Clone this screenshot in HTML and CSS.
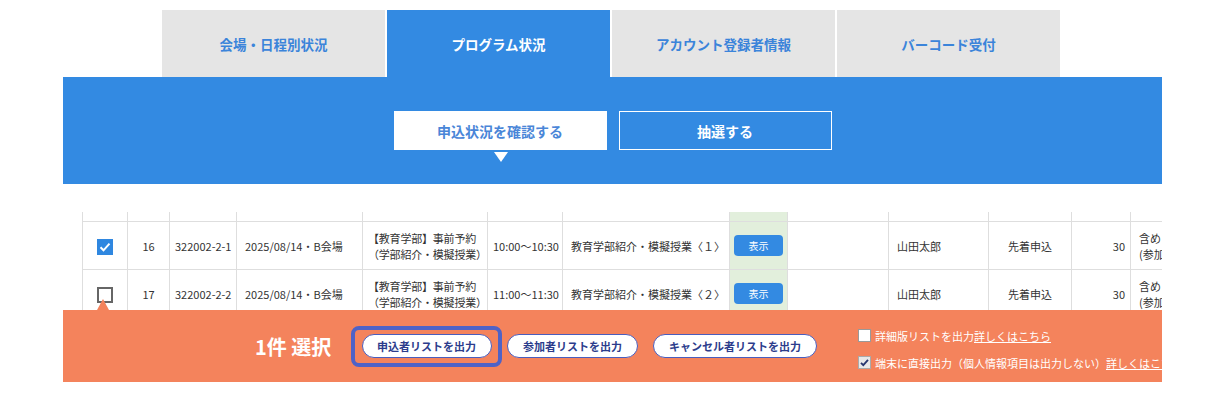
FILE: index.html
```html
<!DOCTYPE html>
<html>
  <head>
    <title>プログラム状況</title>
    <link rel="stylesheet" href="styles.css">
  </head>
  <body>
    <div class="page">
      <div class="tabs">
        <a class="tab">会場・日程別状況</a>
        <a class="tab tab-active">プログラム状況</a>
        <a class="tab">アカウント登録者情報</a>
        <a class="tab">バーコード受付</a>
      </div>
      <div class="band">
        <button class="sub-btn sub-btn-active">申込状況を確認する</button>
        <button class="sub-btn">抽選する</button>
      </div>

      <div class="table-area">
        <table class="list">
          <colgroup>
            <col style="width:45px"><col style="width:42px"><col style="width:67px"><col style="width:126px">
            <col style="width:125px"><col style="width:75px"><col style="width:167px"><col style="width:58px">
            <col style="width:101px"><col style="width:100px"><col style="width:83px"><col style="width:59px">
            <col style="width:100px">
          </colgroup>
          <tr class="head">
            <td></td><td></td><td></td><td></td><td></td><td></td><td></td>
            <td class="col-green"></td><td></td><td></td><td></td><td></td><td></td>
          </tr>
          <tr>
            <td class="c"><span class="check check-on"><svg viewBox="0 0 16 16" width="16" height="16"><path d="M3.5 8.3l3 3 6-6.6" fill="none" stroke="#fff" stroke-width="2"/></svg></span></td>
            <td class="c">16</td>
            <td>322002-2-1</td>
            <td class="pl">2025/08/14・B会場</td>
            <td class="pl tight">【教育学部】事前予約<br>（学部紹介・模擬授業）</td>
            <td>10:00〜10:30</td>
            <td class="pl">教育学部紹介・模擬授業〈１〉</td>
            <td class="col-green"><button class="show-btn">表示</button></td>
            <td></td>
            <td class="pl">山田太郎</td>
            <td class="c">先着申込</td>
            <td class="r">30</td>
            <td class="pl">含め<br>(参加</td>
          </tr>
          <tr>
            <td class="c"><span class="check"></span></td>
            <td class="c">17</td>
            <td>322002-2-2</td>
            <td class="pl">2025/08/14・B会場</td>
            <td class="pl tight">【教育学部】事前予約<br>（学部紹介・模擬授業）</td>
            <td>11:00〜11:30</td>
            <td class="pl">教育学部紹介・模擬授業〈２〉</td>
            <td class="col-green"><button class="show-btn">表示</button></td>
            <td></td>
            <td class="pl">山田太郎</td>
            <td class="c">先着申込</td>
            <td class="r">30</td>
            <td class="pl">含め<br>(参加</td>
          </tr>
        </table>
      </div>

      <div class="action-bar">
        <span class="bar-arrow"></span>
        <div class="count">1件 選択</div>
        <div class="focus-ring">
          <button class="out-btn">申込者リストを出力</button>
        </div>
        <button class="out-btn out-btn-2">参加者リストを出力</button>
        <button class="out-btn out-btn-3">キャンセル者リストを出力</button>
        <div class="options">
          <label class="opt"><span class="mini-box"></span>詳細版リストを出力<a class="more">詳しくはこちら</a></label>
          <label class="opt"><span class="mini-box mini-on"><svg viewBox="0 0 13 13" width="13" height="13"><path d="M3 6.8l2.3 2.4L10 3.8" fill="none" stroke="#26356e" stroke-width="1.8"/></svg></span>端末に直接出力（個人情報項目は出力しない）<a class="more">詳しくはこちら</a></label>
        </div>
      </div>
    </div>
  </body>
</html>
```

FILE: styles.css
```css
body {
  margin: 0;
  font-family: "Noto Sans CJK JP", "Noto Sans", sans-serif;
  color: #333;
}
.page {
  width: 1099px;
  margin-left: 63px;
  overflow: hidden;
}

/* tabs */
.tabs {
  display: flex;
  gap: 2px;
  padding-left: 99px;
  margin-top: 10px;
}
.tab {
  width: 223px;
  height: 67px;
  display: flex;
  align-items: center;
  justify-content: center;
  background-color: #e5e5e5;
  color: #3b84da;
  font-size: 13.5px;
  font-weight: bold;
}
.tab-active {
  background-color: #338ae2;
  color: #fff;
}
.band {
  height: 107px;
  background-color: #338ae2;
  display: flex;
  justify-content: center;
  align-items: flex-start;
  gap: 12px;
  padding-top: 34px;
  box-sizing: border-box;
}
.sub-btn {
  position: relative;
  width: 213px;
  height: 39px;
  background: transparent;
  border: 1px solid #fff;
  color: #fff;
  font-family: inherit;
  font-size: 14px;
  font-weight: bold;
}
.sub-btn-active {
  background-color: #fff;
  color: #4a86d8;
}
.sub-btn-active::after {
  content: "";
  position: absolute;
  left: 99px;
  top: 40px;
  border-left: 7px solid transparent;
  border-right: 7px solid transparent;
  border-top: 10px solid #fff;
}

/* table */
.table-area {
  margin-top: 28px;
  height: 98px;
  overflow: hidden;
  padding-left: 19px;
}
.list {
  border-collapse: collapse;
  table-layout: fixed;
  width: 1068px;
  font-size: 11px;
}
.list td {
  border: 1px solid #dedede;
  height: 47px;
  padding: 0 5px;
  line-height: 16px;
  white-space: nowrap;
  overflow: hidden;
  vertical-align: middle;
}
.list .head td {
  height: 9px;
  border-top: none;
}
.list td.c { text-align: center; }
.list td.r { text-align: right; }
.list td.pl { padding-left: 8px; }
.list td.tight {
  padding-left: 5px;
  padding-right: 0;
  letter-spacing: -0.2px;
}
.list td.col-green {
  background-color: #e2efdc;
  padding: 0 4px;
}
.check {
  display: inline-block;
  width: 16px;
  height: 16px;
  box-sizing: border-box;
  border: 2px solid #666;
  background: #fff;
  vertical-align: middle;
}
.check-on {
  border: none;
  background-color: #2f87e0;
}
.check svg { display: block; }
.show-btn {
  width: 49px;
  height: 21px;
  border: none;
  border-radius: 4px;
  background-color: #338ae2;
  color: #fff;
  font-family: inherit;
  font-size: 10px;
  padding: 0;
}

/* action bar */
.action-bar {
  position: relative;
  height: 72px;
  background-color: #f4835c;
  display: flex;
  align-items: center;
  padding-left: 192px;
  box-sizing: border-box;
}
.action-bar > * {
  flex-shrink: 0;
}
.bar-arrow {
  position: absolute;
  left: 34px;
  top: -11px;
  border-left: 6px solid transparent;
  border-right: 6px solid transparent;
  border-bottom: 11px solid #f4835c;
}
.count {
  color: #fff;
  font-size: 20px;
  font-weight: bold;
  width: 96px;
}
.focus-ring {
  width: 151px;
  height: 41px;
  box-sizing: border-box;
  border: 4px solid #4f62c6;
  border-radius: 8px;
  display: flex;
  align-items: center;
  justify-content: center;
}
.out-btn {
  width: 130px;
  height: 24px;
  border: 1px solid #4a5dbd;
  border-radius: 12px;
  background-color: #fff;
  color: #2c3c8c;
  font-family: inherit;
  font-size: 11px;
  font-weight: bold;
  padding: 0;
}
.out-btn-2 {
  width: 131px;
  margin-left: 5px;
}
.out-btn-3 {
  width: 164px;
  margin-left: 15px;
}
.options {
  margin-left: 41px;
  margin-top: 6px;
  display: flex;
  flex-direction: column;
  gap: 11px;
  white-space: nowrap;
}
.opt {
  display: flex;
  align-items: center;
  color: #fff;
  font-size: 11px;
  height: 16px;
}
.mini-box {
  width: 13px;
  height: 13px;
  box-sizing: border-box;
  border: 1px solid #999;
  background: #fff;
  margin-right: 4px;
}
.mini-on {
  background: #e8e8e8;
  border-color: #aaa;
}
.mini-on svg {
  display: block;
  margin: -1px;
}
.more {
  text-decoration: underline;
}
```
